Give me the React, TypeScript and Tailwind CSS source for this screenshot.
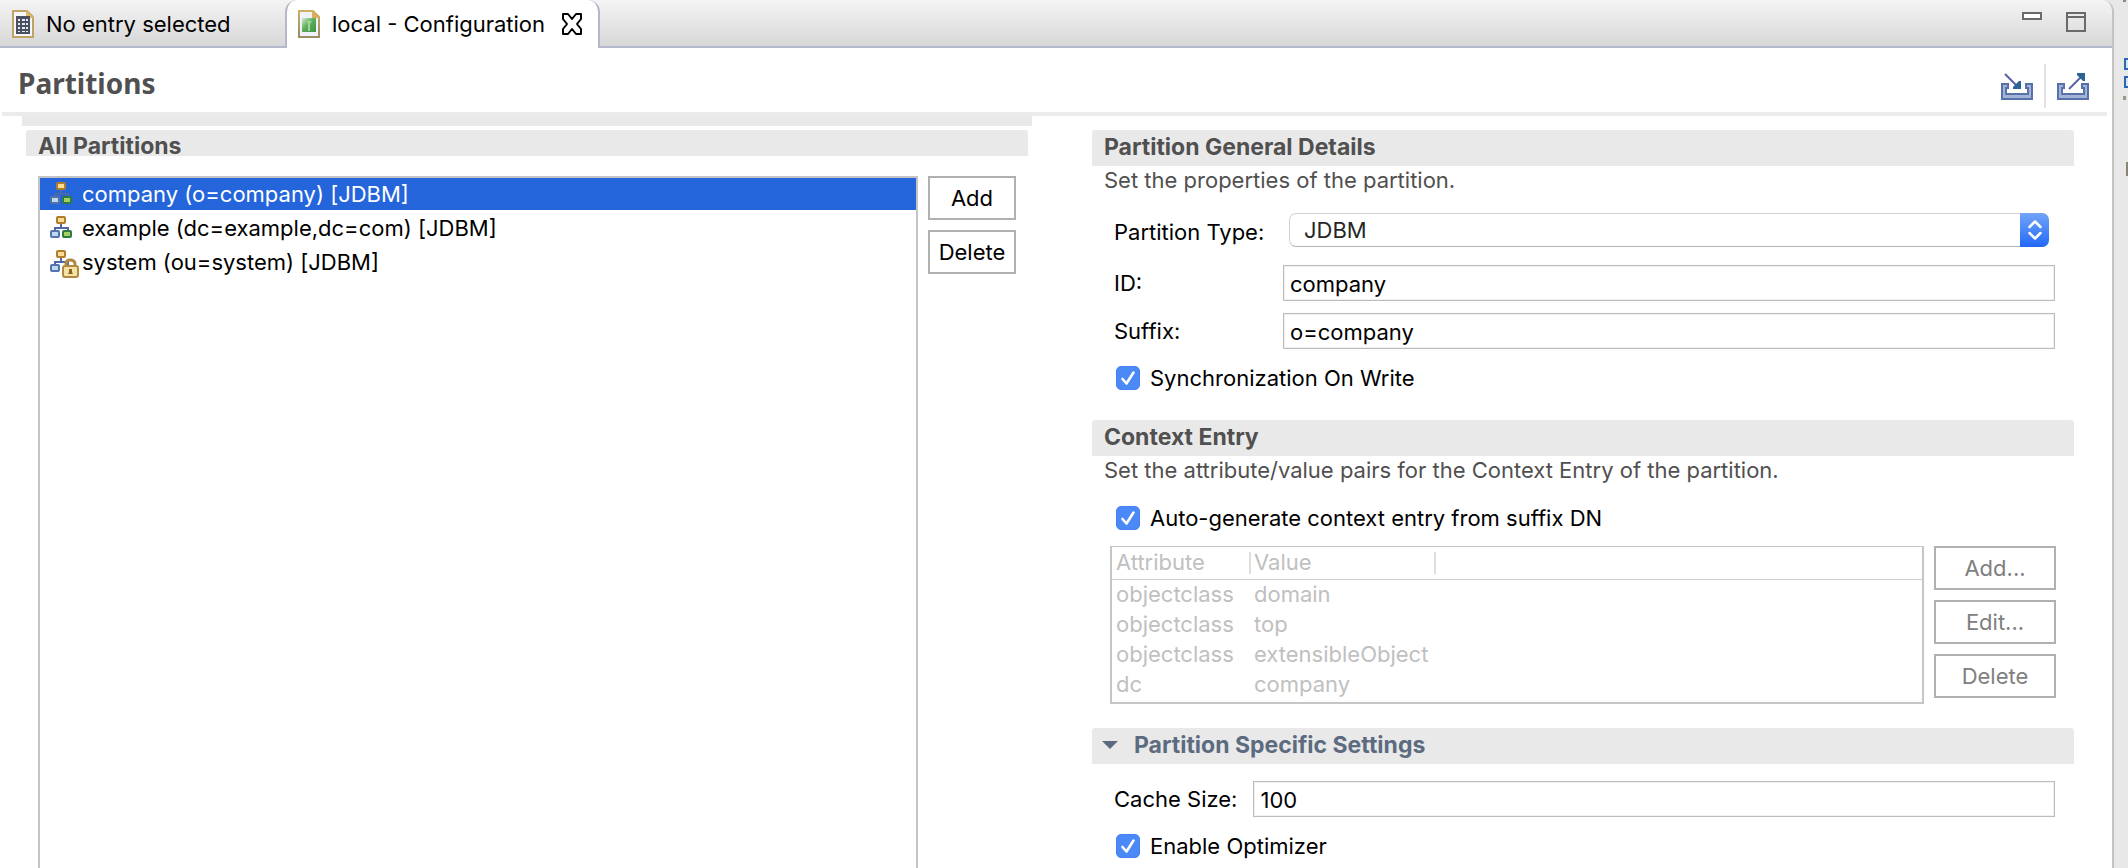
import type { ReactNode } from "react";

type Partition = { label: string; locked?: boolean; selected?: boolean };

const partitions: Partition[] = [
  { label: "company (o=company) [JDBM]", selected: true },
  { label: "example (dc=example,dc=com) [JDBM]" },
  { label: "system (ou=system) [JDBM]", locked: true },
];

const contextEntries = [
  ["objectclass", "domain"],
  ["objectclass", "top"],
  ["objectclass", "extensibleObject"],
  ["dc", "company"],
];

function EntryIcon() {
  return (
    <svg width="22" height="28" viewBox="0 0 22 28" aria-hidden="true">
      <path d="M1 1H15L21 7V27H1Z" fill="#f6f7fb" stroke="#c0a464" strokeWidth="2" />
      <path d="M14 0V8H22Z" fill="#dcb96c" />
      <rect x="4" y="6" width="14" height="18" fill="#4b5060" />
      <g fill="#e8ebf4">
        <rect x="6" y="9" width="2" height="2" />
        <rect x="10" y="9" width="3" height="2" />
        <rect x="14" y="9" width="2" height="2" />
        <rect x="6" y="13" width="2" height="2" />
        <rect x="10" y="13" width="3" height="2" />
        <rect x="14" y="13" width="2" height="2" />
        <rect x="6" y="17" width="2" height="2" />
        <rect x="10" y="17" width="3" height="2" />
        <rect x="14" y="17" width="2" height="2" />
        <rect x="6" y="21" width="2" height="1" />
        <rect x="10" y="21" width="3" height="1" />
        <rect x="14" y="21" width="2" height="1" />
      </g>
    </svg>
  );
}

function ConfigurationIcon() {
  return (
    <svg width="22" height="28" viewBox="0 0 22 28" aria-hidden="true">
      <defs>
        <linearGradient id="cfg" x1="0" y1="0" x2="1" y2="1">
          <stop offset="0" stopColor="#d3ecd0" />
          <stop offset="0.45" stopColor="#5fae5b" />
          <stop offset="1" stopColor="#3c9440" />
        </linearGradient>
        <linearGradient id="cfgBorder" x1="0" y1="0" x2="0" y2="1">
          <stop offset="0" stopColor="#cfae66" />
          <stop offset="1" stopColor="#9c8d62" />
        </linearGradient>
      </defs>
      <path d="M1 1H15L21 7V27H1Z" fill="#eef3fb" stroke="url(#cfgBorder)" strokeWidth="2" />
      <path d="M14 0V8H22Z" fill="#dcae5c" />
      <rect x="4" y="8" width="14" height="14" fill="url(#cfg)" />
      <path d="M9 11H14L12 14V21H10V14Z" fill="#9fd49a" />
    </svg>
  );
}

function PartitionIcon({ locked }: { locked?: boolean }) {
  return (
    <svg width="30" height="32" viewBox="0 0 30 32" aria-hidden="true" className="shrink-0">
      <path d="M11 12V16M5 20V16H18V20" fill="none" stroke="#4d68a5" strokeWidth="2" />
      <rect x="7" y="5" width="8" height="6" rx="1" fill="#fbdc94" stroke="#ae7e2c" strokeWidth="2" />
      <rect x="1" y="19" width="8" height="6" rx="1" fill="#bcd9ee" stroke="#5672ac" strokeWidth="2" />
      {locked ? (
        <g>
          <path d="M16 22V18Q16 14 20 14Q25 14 25 18V22" fill="none" stroke="#b08a40" strokeWidth="3" />
          <rect x="13" y="20" width="15" height="11" rx="2" fill="#f6e3a4" stroke="#b08a40" strokeWidth="2" />
          <path d="M19 23H22V26L23 28H18L19 26Z" fill="#8a6528" />
        </g>
      ) : (
        <rect x="13" y="19" width="8" height="6" rx="1" fill="#a4cf5e" stroke="#2f7a44" strokeWidth="2" />
      )}
    </svg>
  );
}

function TrayIcon({ out }: { out?: boolean }) {
  return (
    <svg width="32" height="28" viewBox="0 0 32 28" aria-hidden="true">
      <path d="M1 12H7V16H5V22H27V16H25V12H31V27H1Z" fill="#a3b4d8" stroke="#5771a9" strokeWidth="2" />
      {out ? (
        <g>
          <path d="M12 17L24 5" stroke="#5860a8" strokeWidth="2" />
          <path d="M20 1H28V9H26L20 3Z" fill="#2c6496" />
        </g>
      ) : (
        <g>
          <path d="M4 2L15 13" stroke="#5860a8" strokeWidth="2" />
          <path d="M20 9V17H12V15L18 9Z" fill="#2c6496" />
        </g>
      )}
    </svg>
  );
}

function SectionHeader({ children }: { children: ReactNode }) {
  return (
    <h2 className="flex h-9 items-center rounded-t-[3px] bg-[#e9e9e9] px-3 pb-[3px] text-[23px] leading-7 font-bold text-[#505050]">
      {children}
    </h2>
  );
}

function Check({ id, label }: { id: string; label: string }) {
  return (
    <div className="flex h-6 items-center gap-[10px] pl-6">
      <span className="relative grid size-6">
        <input
          id={id}
          type="checkbox"
          defaultChecked
          className="peer size-6 appearance-none rounded-[5px] border border-[#b5b5b5] bg-white checked:border-[#4683f0] checked:bg-[#4b89f6]"
        />
        <svg
          viewBox="0 0 24 24"
          aria-hidden="true"
          className="pointer-events-none absolute inset-0 hidden size-6 peer-checked:block"
        >
          <path d="M6.500 13L10.500 17.500L17.500 6.500" fill="none" stroke="#fff" strokeWidth="2.600" strokeLinecap="round" strokeLinejoin="round" />
        </svg>
      </span>
      <label htmlFor={id}>{label}</label>
    </div>
  );
}

function TextField({ id, value }: { id: string; value: string }) {
  return (
    <input
      id={id}
      type="text"
      defaultValue={value}
      className="h-9 min-w-0 flex-1 border border-[#bcbcbc] bg-white px-[6px] pt-[2px] shadow-[inset_0_0_0_1px_#f0f0f0] outline-none"
    />
  );
}

function PushButton({ children, disabled }: { children: ReactNode; disabled?: boolean }) {
  return (
    <button
      type="button"
      disabled={disabled}
      className="h-11 border-2 border-[#b0b0b0] bg-white text-black disabled:text-[#808080]"
    >
      {children}
    </button>
  );
}

function TabBar() {
  return (
    <div className="flex h-12 bg-linear-to-b from-[#f4f4f4] to-[#d6d6d6]">
      <button type="button" className="flex w-[285px] items-center gap-3 border-b-2 border-[#b4b8cc] pt-[2px] pl-3">
        <EntryIcon />
        No entry selected
      </button>
      <div className="flex items-center gap-[17px] rounded-t-xl border-x-2 border-[#b4b8cc] bg-white pr-4 pl-[11px]">
        <button type="button" className="flex items-center gap-3">
          <ConfigurationIcon />
          local - Configuration
        </button>
        <button type="button" aria-label="Close">
          <svg width="20" height="22" viewBox="0 0 20 22" aria-hidden="true">
            <path
              d="M1 1H6L10 6L14 1H19V6L15 11L19 16V21H14L10 16L6 21H1V16L5 11L1 6Z"
              fill="#fff"
              stroke="#000"
              strokeWidth="2"
              strokeLinejoin="round"
            />
          </svg>
        </button>
      </div>
      <div className="flex flex-1 items-start justify-end gap-6 border-b-2 border-[#b4b8cc] pt-3 pr-[26px]">
        <button type="button" aria-label="Minimize" className="h-2 w-5 border-2 border-[#6a6a6a] bg-white" />
        <button type="button" aria-label="Maximize" className="flex size-5 flex-col border-2 border-[#6a6a6a]">
          <span className="mt-[2px] h-[2px] w-full bg-[#6a6a6a]" />
        </button>
      </div>
    </div>
  );
}

function AllPartitions() {
  return (
    <section className="flex flex-col">
      <div className="h-[10px] bg-[#e9e9e9]" />
      <h2 className="mx-1 mt-1 flex h-[26px] items-center rounded-t-[3px] bg-[#e9e9e9] px-3 pt-[6px] text-[23px] leading-5 font-bold text-[#505050]">
        All Partitions
      </h2>
      <div className="mt-5 flex flex-1 gap-[10px] pr-4 pl-4">
        <ul className="flex flex-1 flex-col gap-[2px] border-2 border-b-0 border-[#c3c3c3] bg-white">
          {partitions.map((p) => (
            <li
              key={p.label}
              className={
                p.selected
                  ? "flex h-8 items-center gap-[2px] bg-[#2465db] pl-[10px] text-white"
                  : "flex h-8 items-center gap-[2px] pl-[10px]"
              }
            >
              <PartitionIcon locked={p.locked} />
              {p.label}
            </li>
          ))}
        </ul>
        <div className="flex w-[88px] flex-col gap-[10px]">
          <PushButton>Add</PushButton>
          <PushButton>Delete</PushButton>
        </div>
      </div>
    </section>
  );
}

function Details() {
  return (
    <div className="pt-[14px]">
      <section>
        <SectionHeader>Partition General Details</SectionHeader>
        <p className="pl-3 text-[#505050]">Set the properties of the partition.</p>
        <div className="mt-[19px] flex items-center pr-[25px] pl-[22px]">
          <label htmlFor="type" className="w-[175px] pt-1">Partition Type:</label>
          <div className="relative flex flex-1">
            <select
              id="type"
              className="h-[34px] flex-1 appearance-none rounded-[7px] border border-[#d2d2d2] border-b-[#b4b4b4] bg-white pr-8 pl-[14px] text-[#262626] outline-none"
            >
              <option>JDBM</option>
            </select>
            <span className="pointer-events-none absolute inset-y-0 right-0 flex w-[29px] items-center justify-center rounded-r-[7px] bg-linear-to-b from-[#72a4f7] to-[#2067f6]">
              <svg width="14" height="22" viewBox="0 0 14 22" aria-hidden="true">
                <path d="M1.500 8L7 2.500L12.500 8M1.500 14L7 19.500L12.500 14" fill="none" stroke="#fff" strokeWidth="2.500" strokeLinecap="round" strokeLinejoin="round" />
              </svg>
            </span>
          </div>
        </div>
        <div className="mt-[18px] flex items-center pr-[19px] pl-[22px]">
          <label htmlFor="pid" className="w-[169px]">ID:</label>
          <TextField id="pid" value="company" />
        </div>
        <div className="mt-3 mb-[17px] flex items-center pr-[19px] pl-[22px]">
          <label htmlFor="suffix" className="w-[169px]">Suffix:</label>
          <TextField id="suffix" value="o=company" />
        </div>
        <Check id="sync" label="Synchronization On Write" />
      </section>

      <section className="mt-[30px]">
        <SectionHeader>Context Entry</SectionHeader>
        <p className="mb-[22px] pl-3 text-[#505050]">
          Set the attribute/value pairs for the Context Entry of the partition.
        </p>
        <Check id="auto" label="Auto-generate context entry from suffix DN" />
        <div className="mt-4 flex items-start gap-[10px] pr-[18px] pl-[18px]">
          <div className="h-[158px] flex-1 border-2 border-t border-[#c6c6c6]">
            <table className="w-full table-fixed border-collapse text-left text-[#c0c0c0]">
              <thead>
                <tr className="h-8 border-b border-[#cfcfcf]">
                  <th className="w-[139px] p-0 font-normal">
                    <div className="h-[22px] border-r-2 border-[#dedede] pl-1 leading-5">Attribute</div>
                  </th>
                  <th className="w-[185px] p-0 font-normal">
                    <div className="h-[22px] border-r-2 border-[#dedede] pl-[3px] leading-5">Value</div>
                  </th>
                  <th className="p-0" />
                </tr>
              </thead>
              <tbody>
                {contextEntries.map(([attribute, value], i) => (
                  <tr key={i} className="h-[30px]">
                    <td className="p-0 pl-1">{attribute}</td>
                    <td className="p-0 pl-[3px]">{value}</td>
                    <td className="p-0" />
                  </tr>
                ))}
              </tbody>
            </table>
          </div>
          <div className="flex w-[122px] flex-col gap-[10px]">
            <PushButton disabled>Add...</PushButton>
            <PushButton disabled>Edit...</PushButton>
            <PushButton disabled>Delete</PushButton>
          </div>
        </div>
      </section>

      <section className="mt-6">
        <h2 className="flex h-9 rounded-t-[3px] bg-[#e9e9e9] pb-[3px] text-[23px] leading-7 font-bold text-[#5d6b80]">
          <button type="button" aria-expanded="true" className="flex items-center gap-4 pl-[10px]">
            <svg width="16" height="8" viewBox="0 0 16 8" aria-hidden="true">
              <path d="M0 0H16L8 8Z" fill="#5d6b80" />
            </svg>
            Partition Specific Settings
          </button>
        </h2>
        <div className="mt-[17px] mb-[17px] flex items-center gap-4 pr-[19px] pl-[22px]">
          <label htmlFor="cache">Cache Size:</label>
          <TextField id="cache" value="100" />
        </div>
        <Check id="optimizer" label="Enable Optimizer" />
      </section>
    </div>
  );
}

export default function App() {
  return (
    <div className="flex min-h-screen bg-[#e8e8e8] font-['Inter',sans-serif] text-[22px] leading-7 text-black">
      <main className="flex flex-1 flex-col overflow-hidden rounded-tr-xl border-r-2 border-[#c3c3bf] bg-white">
        <TabBar />
        <header className="mr-[5px] ml-[2px] flex h-[68px] items-center justify-between border-b-4 border-[#ebebeb] pr-[18px] pl-4">
          <h1 className="pt-[6px] font-['Noto_Sans',sans-serif] text-[28px] leading-9 font-bold text-[#505050]">Partitions</h1>
          <div className="flex items-center gap-[11px] pt-3">
            <button type="button" aria-label="Import">
              <TrayIcon />
            </button>
            <span className="h-11 w-[2px] bg-[#e2e2e2]" />
            <button type="button" aria-label="Export">
              <TrayIcon out />
            </button>
          </div>
        </header>
        <div className="grid flex-1 grid-cols-[1010fr_982fr] gap-[60px] pr-[38px] pl-[22px]">
          <AllPartitions />
          <Details />
        </div>
      </main>
      <aside className="w-[14px] shrink-0">
        <svg width="14" height="180" viewBox="0 0 14 180" aria-hidden="true">
          <rect x="9" y="0" width="3" height="2" fill="#8f8f80" />
          <rect x="11" y="59" width="8" height="10" fill="#d5e6fa" stroke="#2c68b0" strokeWidth="2" />
          <rect x="11" y="77" width="8" height="10" fill="#d5e6fa" stroke="#2c68b0" strokeWidth="2" />
          <rect x="9" y="96" width="3" height="4" fill="#9c9888" />
          <rect x="13" y="163" width="4" height="12" fill="#6fa0b0" stroke="#8a8470" strokeWidth="2" />
        </svg>
      </aside>
    </div>
  );
}
